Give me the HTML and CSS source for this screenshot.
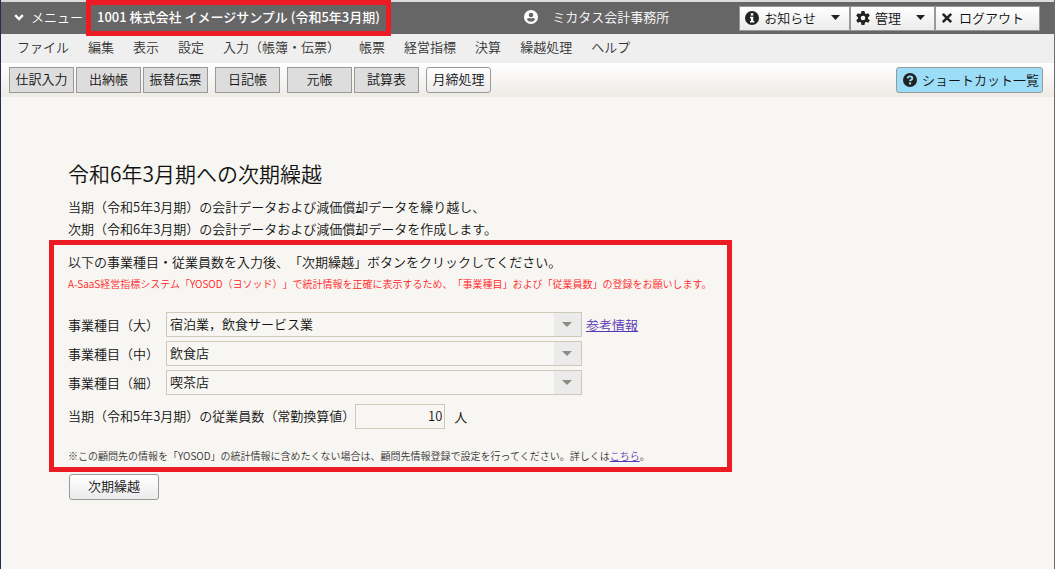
FILE: index.html
```html
<!DOCTYPE html>
<html lang="ja">
<head>
  <meta charset="UTF-8">
  <meta name="viewport" content="width=device-width, initial-scale=1">
  <title>次期繰越</title>
  <link rel="stylesheet" href="styles.css">
</head>
<body>
  <header class="topbar">
    <button class="menu-toggle" type="button">
      <svg width="10" height="7" viewBox="0 0 10 7"><path d="M1.2 1.2 5 5l3.8-3.8" fill="none" stroke="#fff" stroke-width="2.4"/></svg>
      メニュー
    </button>
    <div class="client">1001 株式会社 イメージサンプル (令和5年3月期)</div>
    <div class="office">
      <svg width="14" height="14" viewBox="0 0 14 14">
        <circle cx="7" cy="7" r="7" fill="#fff"/>
        <circle cx="7" cy="5" r="2.3" fill="#666"/>
        <path d="M2.8 9.2q1.1-1.2 2.4-1.1 1.8.8 3.6 0 1.3-.1 2.4 1.1-1.5 2.6-4.2 2.6T2.8 9.200z" fill="#666"/>
      </svg>
      <span>ミカタス会計事務所</span>
    </div>
    <div class="actions">
      <button type="button">
        <svg width="14" height="14" viewBox="0 0 14 14"><circle cx="7" cy="7" r="7" fill="#222"/><path d="M5.800 2.200h2.500v2.200H5.800zM5 5.700h3.300v4.300h1V11.600H5V10h.9V7.200H5z" fill="#fff"/></svg>
        <span>お知らせ</span>
        <svg class="caret" width="9" height="5" viewBox="0 0 9 5"><path d="M0 0h9L4.500 5z" fill="#222"/></svg>
      </button>
      <button type="button">
        <svg width="14" height="14" viewBox="0 0 14 14">
          <g fill="#222">
            <path id="tooth" d="M5.500 0h3l.6 3H4.900zM5.500 14h3l.6-3H4.900z"/>
            <use href="#tooth" transform="rotate(60 7 7)"/>
            <use href="#tooth" transform="rotate(120 7 7)"/>
          </g>
          <circle cx="7" cy="7" r="3.700" fill="none" stroke="#222" stroke-width="2.800"/>
        </svg>
        <span>管理</span>
        <svg class="caret" width="9" height="5" viewBox="0 0 9 5"><path d="M0 0h9L4.500 5z" fill="#222"/></svg>
      </button>
      <button type="button">
        <svg width="12" height="12" viewBox="0 0 12 12"><path d="M1.800 1.800l8.400 8.400M10.200 1.800l-8.400 8.400" stroke="#222" stroke-width="2.600"/></svg>
        <span class="logout">ログアウト</span>
      </button>
    </div>
  </header>

  <nav class="menu">
    <a href="#">ファイル</a>
    <a href="#">編集</a>
    <a href="#">表示</a>
    <a href="#">設定</a>
    <a href="#">入力（帳簿・伝票）</a>
    <a href="#">帳票</a>
    <a href="#">経営指標</a>
    <a href="#">決算</a>
    <a href="#">繰越処理</a>
    <a href="#">ヘルプ</a>
  </nav>

  <div class="toolbar">
    <div class="group">
      <button class="tool" type="button">仕訳入力</button>
      <button class="tool" type="button">出納帳</button>
      <button class="tool" type="button">振替伝票</button>
    </div>
    <button class="tool" type="button">日記帳</button>
    <div class="group">
      <button class="tool" type="button">元帳</button>
      <button class="tool" type="button">試算表</button>
    </div>
    <button class="tool tool-on" type="button">月締処理</button>
    <button class="shortcut" type="button">
      <svg width="14" height="14" viewBox="0 0 14 14"><circle cx="7" cy="7" r="7" fill="#222"/><path d="M4.600 5.300Q4.900 3.400 7 3.400q2.300 0 2.300 1.800 0 1-1.200 1.700-1 .5-1 1.400" fill="none" stroke="#9cddf8" stroke-width="1.900"/><path d="M6 9.400h2.100v2H6z" fill="#9cddf8"/></svg>
      <span>ショートカット一覧</span>
    </button>
  </div>

  <main class="content">
    <h1>令和6年3月期への次期繰越</h1>
    <p class="lead">当期（令和5年3月期）の会計データおよび減価償却データを繰り越し、<br>次期（令和6年3月期）の会計データおよび減価償却データを作成します。</p>

    <form>
      <section class="entry">
        <p>以下の事業種目・従業員数を入力後、「次期繰越」ボタンをクリックしてください。</p>
        <p class="caution">A-SaaS経営指標システム「YOSOD（ヨソッド）」で統計情報を正確に表示するため、「事業種目」および「従業員数」の登録をお願いします。</p>

        <div class="fields">
          <div class="field">
            <label for="large">事業種目（大）</label>
            <div class="select">
              <select id="large"><option>宿泊業，飲食サービス業</option></select>
              <svg width="10" height="5" viewBox="0 0 10 5"><path d="M0 0h10L5 5z" fill="#8f8b80"/></svg>
            </div>
            <a class="link" href="#">参考情報</a>
          </div>
          <div class="field">
            <label for="middle">事業種目（中）</label>
            <div class="select">
              <select id="middle"><option>飲食店</option></select>
              <svg width="10" height="5" viewBox="0 0 10 5"><path d="M0 0h10L5 5z" fill="#8f8b80"/></svg>
            </div>
          </div>
          <div class="field">
            <label for="small">事業種目（細）</label>
            <div class="select">
              <select id="small"><option>喫茶店</option></select>
              <svg width="10" height="5" viewBox="0 0 10 5"><path d="M0 0h10L5 5z" fill="#8f8b80"/></svg>
            </div>
          </div>
        </div>

        <div class="staff">
          <label for="staff">当期（令和5年3月期）の従業員数（常勤換算値）</label>
          <input id="staff" type="text" inputmode="numeric" value="10">
          <span class="unit">人</span>
        </div>

        <p class="note">※この顧問先の情報を「YOSOD」の統計情報に含めたくない場合は、顧問先情報登録で設定を行ってください。詳しくは<a class="link" href="#">こちら</a>。</p>
      </section>
      <button class="submit" type="submit">次期繰越</button>
    </form>
  </main>
</body>
</html>
```

FILE: styles.css
```css
:root {
  --text: #111;
  --line: #999;
  --field-line: #d0c8b9;
  --mark: #ed1c24;
  --page: #f7f6f2;
}

* {
  box-sizing: border-box;
}

body {
  margin: 0;
  min-height: 100vh;
  border-left: 1px solid #222c55;
  border-right: 1px solid #6b6b70;
  background: var(--page);
  color: var(--text);
  font-family: "Noto Sans CJK JP", sans-serif;
  font-size: 13px;
  font-weight: 350;
  line-height: 22px;
  text-spacing-trim: space-all;
}

button,
input,
select {
  font: inherit;
  color: inherit;
}

button {
  padding: 0 0 2px;
  cursor: pointer;
}

p,
h1 {
  margin: 0;
}

/* header */
.topbar {
  display: flex;
  align-items: center;
  height: 34px;
  padding: 0 14px 0 13px;
  border-top: 2px solid #dcdcdc;
  background: #666;
  color: #fff;
  white-space: nowrap;
}

.menu-toggle {
  display: flex;
  align-items: center;
  gap: 7px;
  border: 0;
  background: none;
  color: #fff;
}

.client {
  position: relative;
  margin-left: 14px;
  padding-bottom: 2px;
  font-weight: 500;
}

.client::after {
  content: "";
  position: absolute;
  inset: -6px -11px;
  border: 5px solid var(--mark);
}

.office {
  display: flex;
  align-items: center;
  gap: 14px;
  margin-left: auto;
  padding-bottom: 2px;
}

.actions {
  display: flex;
  margin-left: 70px;
  border: 1px solid var(--line);
  background: linear-gradient(#fff, #ebebeb);
  color: var(--text);
}

.actions button {
  display: flex;
  align-items: center;
  gap: 5px;
  height: 23px;
  padding: 0 9px 1px 5px;
  border: 0;
  background: none;
}

.actions button + button {
  border-left: 2px solid var(--line);
}

.caret {
  margin-left: 10px;
}

.logout {
  padding: 0 6px 0 1px;
}

/* menu */
.menu {
  display: flex;
  align-items: center;
  gap: 19px;
  height: 29px;
  padding: 0 16px 3px;
  background: #efefef;
  white-space: nowrap;
}

.menu a {
  color: #333;
  text-decoration: none;
}

/* toolbar */
.toolbar {
  display: flex;
  align-items: center;
  gap: 7px;
  height: 34px;
  padding: 0 11px 0 8px;
  background: linear-gradient(#fff, #eeebe5);
  white-space: nowrap;
}

.group {
  display: flex;
  gap: 2px;
}

.tool {
  width: 65px;
  height: 26px;
  border: 1px solid var(--line);
  background: #ddd;
}

.tool-on,
.submit {
  border: 1px solid var(--line);
  border-radius: 3px;
  background: linear-gradient(#fff, #ebebeb);
}

.shortcut {
  display: flex;
  align-items: center;
  gap: 5px;
  height: 26px;
  margin-left: auto;
  padding: 0 3px 1px 6px;
  border: 1px solid var(--line);
  border-radius: 3px;
  background: #9cddf8;
}

/* content */
.content {
  padding: 60px 48px 40px;
}

h1 {
  margin-left: 19px;
  font-size: 21px;
  font-weight: 350;
  line-height: 32px;
}

.lead {
  margin: 7px 0 0 19px;
}

.entry {
  width: fit-content;
  max-width: 100%;
  min-width: 683px;
  padding: 6px 14px 0;
  border: 5px solid var(--mark);
}

.caution,
.note {
  font-size: 10px;
}

.caution {
  color: #f22;
}

.fields {
  display: flex;
  flex-direction: column;
  gap: 4px;
  margin-top: 17px;
}

.field {
  display: flex;
  align-items: center;
  gap: 4px;
}

.field label {
  width: 94px;
}

.select {
  position: relative;
  display: flex;
  width: 416px;
}

.select select {
  width: 100%;
  height: 25px;
  padding: 0 30px 3px 3px;
  border: 1px solid var(--field-line);
  border-radius: 0;
  background: linear-gradient(to left, #ebebeb 27px, var(--page) 27px);
  appearance: none;
}

.select svg {
  position: absolute;
  top: 10px;
  right: 10px;
  pointer-events: none;
}

.link {
  color: #5a36b5;
}

.staff {
  display: flex;
  align-items: center;
  margin-top: 9px;
}

.staff label {
  padding-bottom: 2px;
}

.staff input {
  width: 90px;
  height: 25px;
  padding: 0 2px 2px;
  border: 1px solid var(--field-line);
  background: none;
  text-align: right;
}

.unit {
  margin-left: 9px;
}

.note {
  margin-top: 16px;
  color: #333;
}

.submit {
  width: 90px;
  height: 26px;
  margin: 2px 0 0 20px;
}
```
